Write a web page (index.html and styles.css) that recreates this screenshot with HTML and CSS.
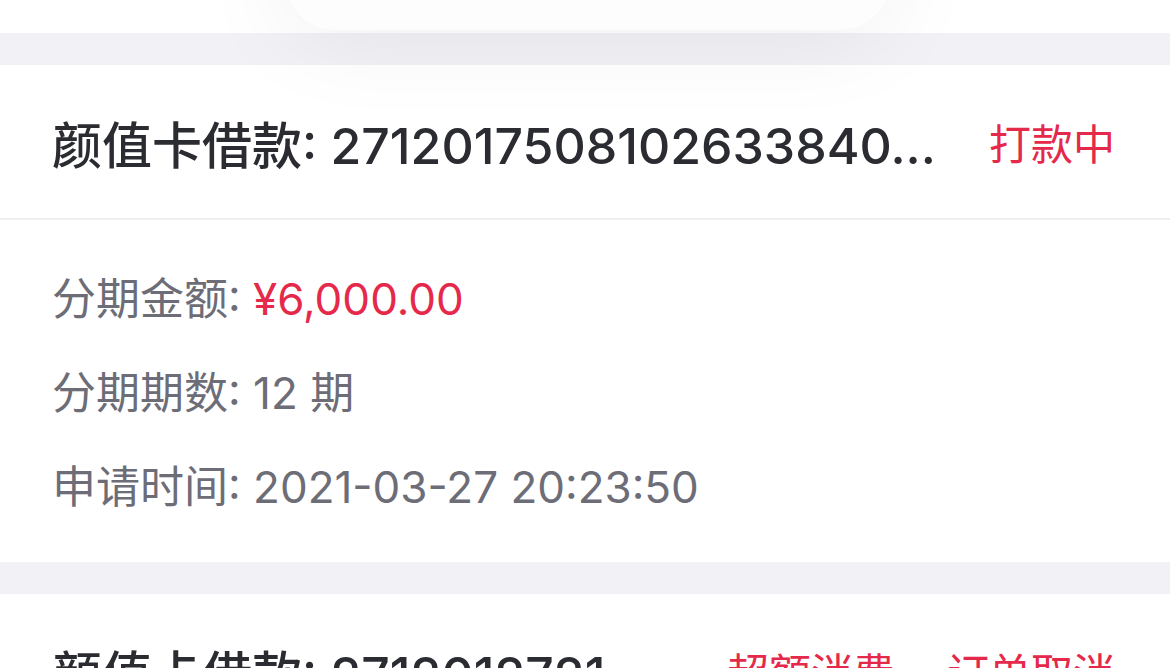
FILE: index.html
```html
<!DOCTYPE html>
<html>
<head>
  <title>借款记录</title>
  <link rel="stylesheet" href="styles.css">
</head>
<body>
  <div class="top-area"></div>
  <div class="toast"></div>

  <div class="gap"></div>

  <div class="order-card">
    <div class="order-head">
      <span class="order-title">颜值卡借款: 2712017508102633840...</span>
      <span class="order-status">打款中</span>
    </div>
    <div class="order-body">
      <p class="order-row">分期金额: <span class="money">¥6,000.00</span></p>
      <p class="order-row">分期期数: 12 期</p>
      <p class="order-row">申请时间: 2021-03-27 20:23:50</p>
    </div>
  </div>

  <div class="gap"></div>

  <div class="order-card">
    <div class="order-head">
      <span class="order-title">颜值卡借款: 2712012721...</span>
      <span class="order-status">超额消费</span>
      <span class="order-status">订单取消</span>
    </div>
  </div>
</body>
</html>
```

FILE: styles.css
```css
body {
  margin: 0;
  font-family: Inter, "Noto Sans CJK SC", sans-serif;
  background-color: #ffffff;
  overflow: hidden;
  height: 668px;
}
.top-area {
  height: 33px;
  background-color: #ffffff;
}
.toast {
  position: absolute;
  left: 285px;
  top: -70px;
  width: 605px;
  height: 100px;
  border-radius: 50px;
  background-color: #fdfdfd;
  box-shadow: 0 0 100px rgba(0, 0, 0, 0.08);
  z-index: 5;
}
.gap {
  height: 32px;
  background-color: #f2f2f6;
}
.order-card {
  background-color: #ffffff;
}
.order-head {
  display: flex;
  align-items: center;
  height: 155px;
  padding: 0 55px 0 52px;
  border-bottom: 2px solid #efeff1;
  box-sizing: border-box;
}
.order-title {
  flex: 1;
  min-width: 0;
  white-space: nowrap;
  overflow: hidden;
  text-overflow: ellipsis;
  font-size: 50px;
  font-weight: 500;
  color: #2b2c31;
}
.order-status {
  margin-left: 52px;
  font-size: 42px;
  color: #e5294b;
  white-space: nowrap;
}
.order-body {
  padding: 32px 52px 28px;
}
.order-row {
  margin: 0;
  line-height: 94px;
  font-size: 44px;
  color: #6d6d77;
}
.money {
  color: #e5294b;
}
```
